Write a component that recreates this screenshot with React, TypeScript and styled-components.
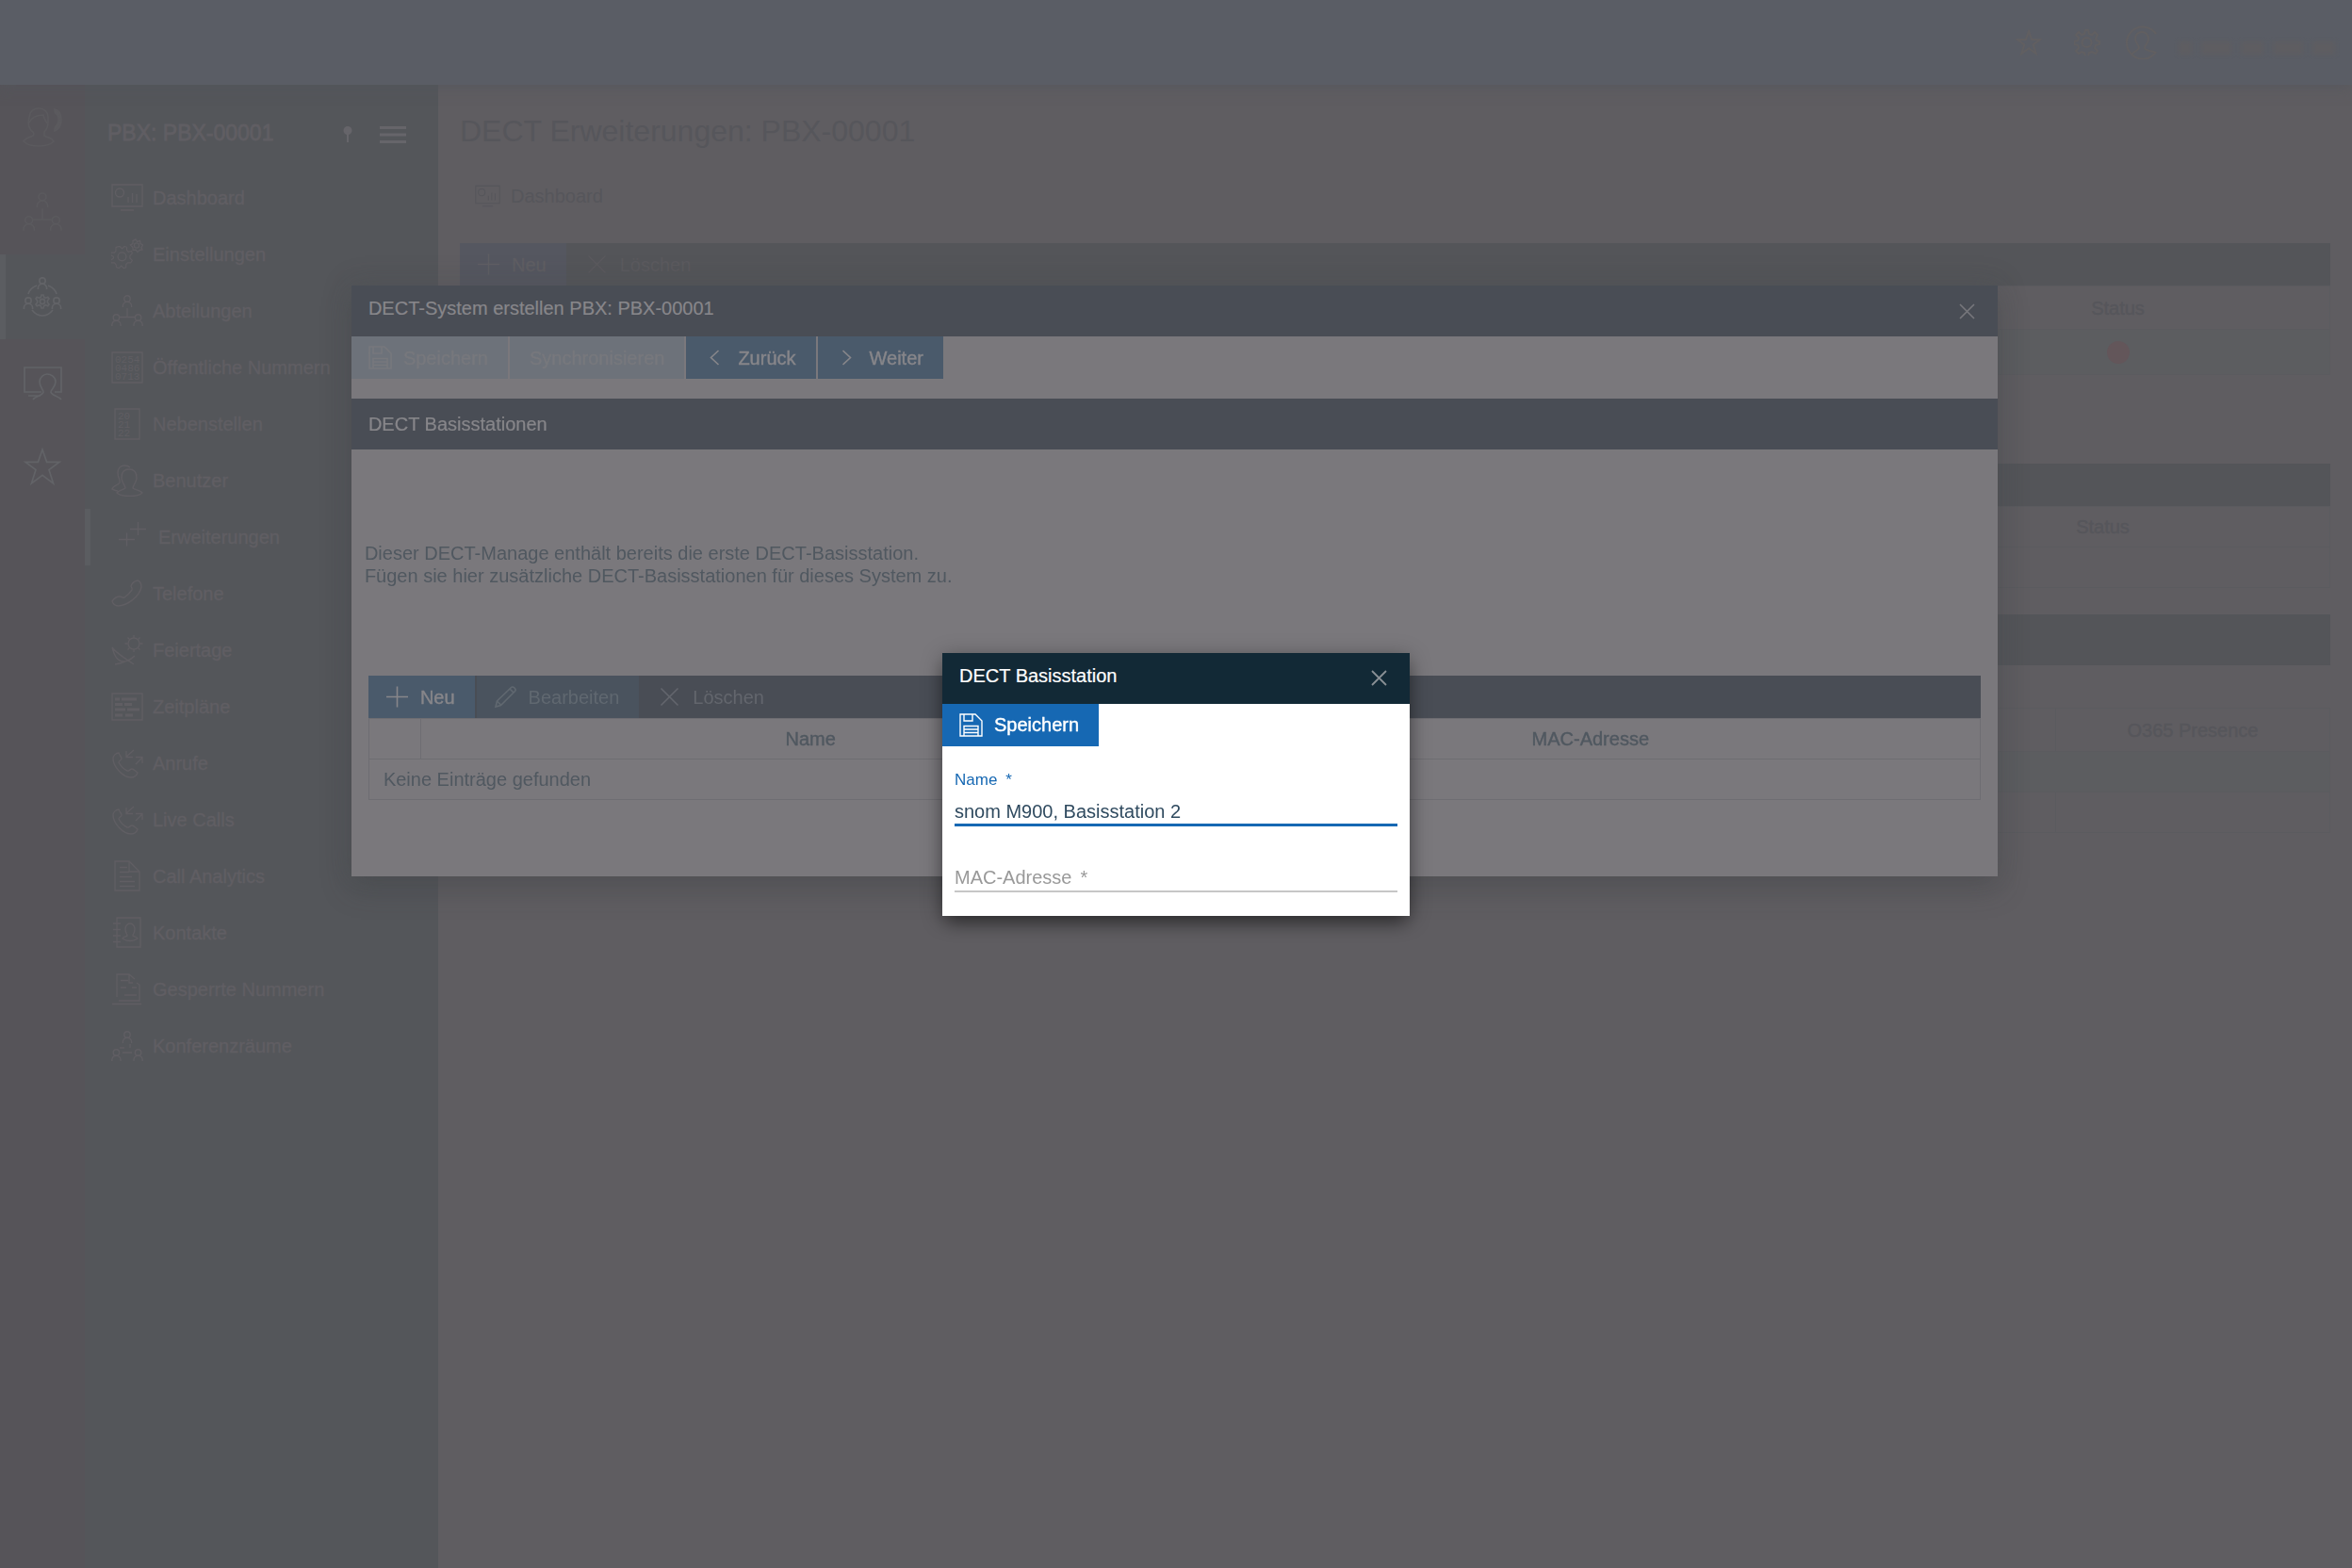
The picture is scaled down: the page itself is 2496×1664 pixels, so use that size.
import React from "react";
import styled, { createGlobalStyle, css } from "styled-components";

const color = {
  topbar: "#5a5d65",
  rail: "#565459",
  side: "#54565a",
  marker: "#5b5d61",
  page: "#5f5d61",
  pageBar: "#545559",
  pageLine: "#5b5b5f",
  pageRow: "#5c5d60",
  pageText: "#56565b",
  sideText: "#605e63",
  dimPaper: "#7a787c",
  dimHeader: "#494d55",
  dimBlue: "#4a5a6b",
  dimOff: "#6d727a",
  dimLine: "#6e6d72",
  dimText: "#505860",
  dimLight: "#87868a",
  paper: "#ffffff",
  header: "#122936",
  blue: "#1668b3",
  ink: "#2f4a5f",
  hint: "#999999",
};

const Global = createGlobalStyle`
  *, *::before, *::after { box-sizing: border-box; }
  html, body { margin: 0; height: 100%; }
  body {
    background: ${color.page};
    font-family: "Liberation Sans", Arial, Helvetica, sans-serif;
    font-size: 20px;
    line-height: 24px;
    overflow: hidden;
  }
  button, input { font: inherit; }
  a { color: inherit; text-decoration: none; }
`;

const medium = css`
  -webkit-text-stroke: 0.4px currentColor;
`;

/* ---------- icons ---------- */

const person = (x: number, y: number) => (
  <>
    <circle cx={x} cy={y} r="3.2" />
    <path d={`M${x - 4.6} ${y + 9}v-1.2a4.6 4.6 0 0 1 9.2 0v1.2`} />
  </>
);

const handset =
  "M2 8c0-3 3-6 6-6 1 3 3 4 3 6 0 2-3 2-3 4 2 4 5 7 9 9 2 1 3-2 5-2 2 0 3 2 6 4-1 3-4 5-7 5C12 28 2 16 2 8z";

const gearPath =
  "M12 1h3l1 4 3 1 3-3 3 3-2 4 1 2 3 1v3l-4 1-1 3 3 3-2 3-4-2-3 1-1 4h-3l-1-4-3-1-3 2-3-3 3-3-1-3-4-1v-3l4-1 1-3-3-3 3-3 3 3 3-1z";

const icons: Record<string, { box: string; body: React.ReactNode }> = {
  agent: {
    box: "0 0 42 42",
    body: (
      <>
        <path d="M11 26C5 22 6 14 7 10 8 4 12 1 17 1c6 0 10 4 10 9v6c0 5-2 8-4 10v4c3 2 8 2 10 6-4 4-10 5-16 5S5 40 1 36c2-4 7-4 10-6 1-1 1-3 0-4z" />
        <path d="M7 16c3-6 9-8 15-8 1 4 3 8 5 9" />
        <path d="M34 2c5 1 7 6 7 11s-2 10-7 12c0-3 0-5 2-6 3-4 3-9 0-12-1 0-2-2-2-5z" fill="currentColor" />
      </>
    ),
  },
  org: {
    box: "0 0 34 34",
    body: (
      <>
        {person(17, 4)}
        {person(5.4, 24)}
        {person(28.6, 24)}
        <path d="M17 14v9M8.5 23.5h17" />
      </>
    ),
  },
  team: {
    box: "0 0 42 42",
    body: (
      <>
        {person(21, 4)}
        {person(6, 25)}
        {person(36, 25)}
        <path d="M15 9C10 11 7 14 6 18M27 9c5 2 8 5 9 9M10 35c6 8 16 8 22 0" />
        <path d="M20 19h2l.8 2.600 1.600.6 2.400-1 1.200 1.800-1.600 2v2l1.600 2-1.200 1.800-2.400-1-1.600.8L22 33h-2l-.8-2.400-1.600-.8-2.400 1-1.200-1.800 1.600-2v-2l-1.600-2 1.200-1.800 2.400 1 1.600-.6z" />
        <circle cx="21" cy="26" r="2.600" />
      </>
    ),
  },
  screenUser: {
    box: "0 0 42 42",
    body: (
      <>
        <path d="M20 32H2V6h39v26h-7" />
        <path d="M11 40c3-4 10-4 11-8 0-3-4-5-4-11 0-4 4-8 8-8s9 3 9 8c0 6-5 8-5 11 1 4 8 4 11 8M6 36h13" />
      </>
    ),
  },
  star: {
    box: "0 0 42 42",
    body: <path d="M21 3l4.600 13.400H39L28 24.600 32.600 39 21 30.400 9.400 39 14 24.600 3 16.400h13.400z" />,
  },
  dashboard: {
    box: "0 0 34 34",
    body: (
      <>
        <path d="M1 3h32v23H1z" />
        <circle cx="9" cy="11.500" r="4.500" />
        <path d="M18 22v-6M22.500 22V12M27 22v-9M10 30h14" />
      </>
    ),
  },
  gears: {
    box: "0 0 34 34",
    body: (
      <>
        <g transform="translate(0 6) scale(.92)">
          <path d="M11 3l3 3 3-3 3 1v4l2 2 4-1 1 3-3 3v3l3 3-2 3h-4l-2 2v4l-3 1-3-3-3 3-3-1-1-4-2-2-4 0-1-3 4-3v-2l-4-2 1-3h4l2-2V4z" transform="scale(.9)" />
          <circle cx="12.500" cy="14.500" r="4.800" />
        </g>
        <path d="M26 1l1.500 2.500 3-1 .5 3 2.500 1.500-1.500 2.500 1 2.500-3 .5-2 2-2-2.500-3 .5V9.500L20.500 7 23 5.500 23 2.500z" />
        <circle cx="27" cy="7.500" r="2.600" />
      </>
    ),
  },
  numbers: {
    box: "0 0 34 34",
    body: (
      <>
        <path d="M1 1h32v32H1z" />
        <g fill="currentColor" stroke="none" fontFamily="Liberation Mono, monospace" fontSize="11">
          <text x="4" y="12">0254</text>
          <text x="4" y="21">0486</text>
          <text x="4" y="30">0713</text>
        </g>
      </>
    ),
  },
  extension: {
    box: "0 0 34 34",
    body: (
      <>
        <path d="M4 1h26v32H4z" />
        <g fill="currentColor" stroke="none" fontFamily="Liberation Mono, monospace" fontSize="11">
          <text x="7" y="12">20</text>
          <text x="7" y="21">21</text>
          <text x="7" y="30">22</text>
        </g>
      </>
    ),
  },
  users: {
    box: "0 0 34 34",
    body: (
      <>
        <path d="M15 25c0-3-4-6-4-11 0-6 3-9 8-9s8 3 8 9c0 5-4 8-4 11 2 2 8 2 10 5-3 3-8 3.500-13 3.500S9 33 6 30c2-3 7-3 9-5z" />
        <path d="M20 3C18 1 16 1 14 1 9 1 7 5 7 9c0 5 3 7 2 10-1 3-7 3-8 7 2 1 4 2 6 2" />
      </>
    ),
  },
  plusPair: { box: "0 0 34 34", body: <path d="M14 8.500h17M22.500 1v14M2 19.500h17M10.500 12.500v14" /> },
  phone: {
    box: "0 0 34 34",
    body: (
      <path d="M28 3c3 1 4 4 4 7-2 10-14 19-24 20-4 0-6-2-7-5 2-3 5-5 8-5 2 0 3 2 5 1 3-2 6-5 8-8 1-2-1-3-1-4 1-3 3-5 7-6z" />
    ),
  },
  holiday: {
    box: "0 0 34 34",
    body: (
      <>
        <circle cx="24" cy="10" r="6" />
        <path d="M24 1v3M24 16v3M14.500 10h3M30.500 10h3M17.500 3.500l2 2M28.500 14.500l2 2M30.500 3.500l-2 2M19.500 14.500l-2 2M1 14c4 6 13 11 23 18M1 14c2 8 6 15 12 15 4 0 8-2 12-6M4 32c7-1 14-3 21-9" />
      </>
    ),
  },
  schedule: {
    box: "0 0 34 34",
    body: (
      <>
        <path d="M1 3h32v28H1z" />
        <path d="M4 9h5M11 9h16M4 14.500h8M14 14.500h8M4 20h11M17 20h13M4 26h8M15 26h8" strokeWidth="3" />
      </>
    ),
  },
  calls: {
    box: "0 0 34 34",
    body: (
      <>
        <path d={handset} transform="translate(0 4)" />
        <path d="M24 3l-8 7M16 4v6.500h7M26 18l7-7M26 10.500h7V17" />
      </>
    ),
  },
  doc: {
    box: "0 0 34 34",
    body: (
      <>
        <path d="M4 1h15l11 11v20H4z" />
        <path d="M19 1v11h11M9 7.500h8M9 12.500h10M9 17.500h13M9 22.500h16M9 27.500h16" />
      </>
    ),
  },
  contacts: {
    box: "0 0 34 34",
    body: (
      <>
        <path d="M6 1h25v31H6z" />
        <path d="M2 7h8M2 13.500h8M2 20h8M2 26.500h8" />
        <path d="M17 20c0-2-2-3-2-7 0-3 2-6 5-6s5 3 5 6c0 4-2 5-2 7 1 1 4 1 5 3-3 2-5 2.500-8 2.500s-5-.5-8-2.500c1-2 4-2 5-3z" />
      </>
    ),
  },
  blocked: {
    box: "0 0 34 34",
    body: (
      <path d="M6 25V1h13l6 5M19 1v9h4M27 10l3 2v17H8M10 7.500h8M10 15h6M22 15h5M14 23h13M1 32.500h31" />
    ),
  },
  rooms: {
    box: "0 0 34 34",
    body: (
      <>
        {person(17, 5)}
        {person(5.4, 24)}
        {person(28.6, 24)}
        <path d="M9 19h5M20 15v4M12 24h10" />
      </>
    ),
  },
  pin: {
    box: "0 0 20 20",
    body: (
      <>
        <circle cx="10" cy="5.500" r="3.500" fill="currentColor" />
        <path d="M10 8v10" />
      </>
    ),
  },
  menu: { box: "0 0 28 28", body: <path d="M0 6.500h28M0 14h28M0 21.500h28" strokeWidth="3" /> },
  save: {
    box: "0 0 25 25",
    body: (
      <>
        <path d="M1 1h16l7 7v16H1z" />
        <path d="M5 1v7h9V1M5 24V13.500h15V24M5 17h15M5 20.500h15" />
      </>
    ),
  },
  plus: { box: "0 0 25 25", body: <path d="M12.500 1.500v22M1 12.500h23" /> },
  pencil: {
    box: "0 0 25 25",
    body: <path d="M2 23l1.500-6L18.500 2.500c2-2 6 2 4 4L7.500 21.500zM17 4l4 4M3.500 17l4 4" />,
  },
  cross: { box: "0 0 25 25", body: <path d="M3.500 3.500l18 18M21.500 3.500l-18 18" /> },
  left: { box: "0 0 25 25", body: <path d="M16.500 5l-8 7.500 8 7.500" /> },
  right: { box: "0 0 25 25", body: <path d="M8.500 5l8 7.500-8 7.500" /> },
  close: { box: "0 0 17 17", body: <path d="M1 1l15 15M16 1L1 16" /> },
  gear: {
    box: "0 0 28 28",
    body: (
      <>
        <path d={gearPath} />
        <circle cx="13.500" cy="14" r="5" />
      </>
    ),
  },
  profile: {
    box: "0 0 36 36",
    body: (
      <>
        <path d="M33 9A17 17 0 1 0 33 28" />
        <path d="M7 31c2-4 7-4 8-7 0-3-4-5-4-10 0-4 3-7 7-7s7 3 7 7c0 5-4 7-4 10 1 3 8 3 12 5" />
      </>
    ),
  },
};

const Svg = styled.svg<{ $size: number }>`
  display: block;
  flex: none;
  width: ${(p) => p.$size}px;
  height: ${(p) => p.$size}px;
  fill: none;
  stroke: currentColor;
`;

function Icon({ name, size, weight = 1.6 }: { name: string; size: number; weight?: number }) {
  return (
    <Svg $size={size} viewBox={icons[name].box} strokeWidth={weight} aria-hidden="true">
      {icons[name].body}
    </Svg>
  );
}

/* ---------- application shell ---------- */

const Shell = styled.div`
  display: flex;
  flex-direction: column;
  min-height: 100vh;
`;

const TopBar = styled.header`
  display: flex;
  align-items: center;
  justify-content: flex-end;
  height: 90px;
  padding-right: 18px;
  background: ${color.topbar};
  box-shadow: 0 2px 14px rgba(82, 86, 92, 0.7);
  z-index: 1;
`;

const TopAction = styled.button<{ $gap: number }>`
  display: flex;
  margin: 0 ${(p) => p.$gap}px 0 0;
  padding: 0;
  border: 0;
  background: none;
  color: #615f61;
`;

const UserName = styled.div`
  display: flex;
  gap: 10px;
  width: 170px;
  padding: 12px 0 0 4px;
`;

const Smudge = styled.span<{ $grow: number }>`
  flex: ${(p) => p.$grow};
  height: 14px;
  background: #5e5d61;
  filter: blur(2px);
`;

const Body = styled.div`
  display: flex;
  flex: 1;
`;

const Rail = styled.nav`
  display: flex;
  flex-direction: column;
  width: 90px;
  background: ${color.rail};
`;

const RailItem = styled.a<{ $active?: boolean; $faint?: boolean }>`
  display: flex;
  align-items: center;
  height: 90px;
  padding-left: ${(p) => (p.$active ? 18 : 24)}px;
  border-left: ${(p) => (p.$active ? `6px solid ${color.marker}` : "0")};
  background: ${(p) => (p.$active ? color.side : "transparent")};
  color: ${(p) => (p.$faint ? "#5b5a5e" : "#626367")};
`;

const Side = styled.nav`
  width: 375px;
  background: ${color.side};
  color: ${color.sideText};
`;

const SideHead = styled.div`
  display: flex;
  align-items: center;
  height: 90px;
  padding: 16px 34px 0 24px;
`;

const SideTitle = styled.h2`
  flex: 1;
  margin: 0;
  padding-bottom: 4px;
  font-size: 23px;
  font-weight: 400;
  -webkit-text-stroke: 0.8px currentColor;
`;

const SideButton = styled.button`
  display: flex;
  margin-left: 24px;
  padding: 0;
  border: 0;
  background: none;
  color: #66656a;
`;

const SideItem = styled.a<{ $active?: boolean }>`
  display: flex;
  align-items: center;
  gap: 10px;
  height: 60px;
  padding-left: 28px;
  border-left: ${(p) => (p.$active ? `6px solid ${color.marker}` : "0")};
  ${medium}
`;

const Main = styled.main`
  flex: 1;
  min-width: 0;
  padding: 29px 23px 0;
  color: ${color.pageText};
`;

const Title = styled.h1`
  margin: 0;
  font-size: 32px;
  line-height: 40px;
  font-weight: 400;
`;

const Crumb = styled.a`
  display: flex;
  align-items: center;
  gap: 11px;
  height: 30px;
  margin: 34px 0 35px 16px;
`;

const Panel = styled.section<{ $gap: number }>`
  margin-bottom: ${(p) => p.$gap}px;
`;

const PageBar = styled.div<{ $tall?: boolean }>`
  display: flex;
  gap: 2px;
  height: ${(p) => (p.$tall ? 54 : 45)}px;
  background: ${color.pageBar};
`;

const PageTable = styled.table<{ $offset?: number }>`
  width: 100%;
  margin-top: ${(p) => p.$offset ?? 0}px;
  border-collapse: collapse;
  table-layout: fixed;
`;

const PageTh = styled.th<{ $tall?: boolean; $width?: number }>`
  width: ${(p) => (p.$width ? `${p.$width}px` : "auto")};
  height: ${(p) => (p.$tall ? 46 : 43)}px;
  padding: 0;
  border: 1px solid ${color.pageLine};
  font-weight: 400;
  ${medium}
`;

const PageTd = styled.td<{ $tall?: boolean; $shade?: boolean }>`
  height: ${(p) => (p.$tall ? 48 : 43)}px;
  padding: 0;
  border: 1px solid ${color.pageLine};
  background: ${(p) => (p.$shade ? color.pageRow : "transparent")};
`;

const Dot = styled.span`
  display: block;
  width: 24px;
  height: 24px;
  margin: 0 auto;
  border-radius: 50%;
  background: #63565a;
`;

/* ---------- buttons and dialogs ---------- */

const tones = {
  primary: { bg: color.blue, fg: "#ffffff" },
  dim: { bg: color.dimBlue, fg: color.dimLight },
  off: { bg: color.dimOff, fg: "#77787d" },
  barOff: { bg: "#4a535e", fg: "#606870" },
  barPlain: { bg: "transparent", fg: "#63666d" },
  page: { bg: "#555760", fg: "#5f5e63" },
  pagePlain: { bg: "transparent", fg: "#5b5a5e" },
};

const ToolButton = styled.button<{ $tone: keyof typeof tones; $textOnly?: boolean; $strong?: boolean }>`
  display: flex;
  align-items: center;
  gap: 12px;
  height: 45px;
  padding: 0 21px 0 ${(p) => (p.$textOnly ? 21 : 18)}px;
  border: 0;
  background: ${(p) => tones[p.$tone].bg};
  color: ${(p) => tones[p.$tone].fg};
  white-space: nowrap;
  ${(p) => p.$strong && medium}
`;

const Backdrop = styled.div<{ $center?: boolean }>`
  position: fixed;
  inset: 0;
  z-index: 2;
  display: flex;
  justify-content: center;
  align-items: ${(p) => (p.$center ? "center" : "flex-start")};
  padding: ${(p) => (p.$center ? "0" : "303px 3px 0 0")};
`;

const SystemDialog = styled.section`
  width: 70vw;
  background: ${color.dimPaper};
  color: ${color.dimText};
  box-shadow: 0 12px 28px rgba(60, 62, 66, 0.35), 0 0 28px rgba(78, 82, 86, 0.3);
`;

const StationDialog = styled.section`
  width: 496px;
  background: ${color.paper};
  box-shadow: 0 10px 18px -4px rgba(0, 0, 0, 0.4), 0 4px 22px rgba(0, 0, 0, 0.3);
`;

const DialogHead = styled.div<{ $dim?: boolean }>`
  display: flex;
  align-items: center;
  justify-content: space-between;
  height: 54px;
  padding: 0 24px 0 18px;
  background: ${(p) => (p.$dim ? color.dimHeader : color.header)};
  color: ${(p) => (p.$dim ? color.dimLight : "#ffffff")};
`;

const DialogTitle = styled.h2`
  margin: 0;
  padding-bottom: 6px;
  font-size: 20px;
  font-weight: 400;
  -webkit-text-stroke: 0.2px currentColor;
`;

const SectionTitle = styled(DialogTitle)`
  padding-bottom: 0;
`;

const CloseButton = styled.button<{ $dim?: boolean }>`
  display: flex;
  padding: 0;
  border: 0;
  background: none;
  color: ${(p) => (p.$dim ? "#77777c" : "#898f94")};
`;

const Toolbar = styled.div<{ $gap?: number }>`
  display: flex;
  gap: 2px;
  margin-bottom: ${(p) => p.$gap ?? 0}px;
`;

const Intro = styled.p`
  margin: 0;
  padding: 98px 14px 94px;
`;

const Stations = styled.div`
  padding: 0 18px 81px;
`;

const StationBar = styled.div`
  display: flex;
  gap: 2px;
  background: ${color.dimHeader};
`;

const StationTable = styled.table`
  width: 100%;
  border-collapse: collapse;
  table-layout: fixed;
`;

const StationTh = styled.th<{ $narrow?: boolean }>`
  width: ${(p) => (p.$narrow ? "55px" : "auto")};
  height: 43px;
  padding: 0;
  border: 1px solid ${color.dimLine};
  border-right-color: ${(p) => (p.$narrow ? color.dimLine : "transparent")};
  font-weight: 400;
  ${medium}
  &:last-child { border-right-color: ${color.dimLine}; }
`;

const StationTd = styled.td`
  height: 43px;
  padding: 0 15px;
  border: 1px solid ${color.dimLine};
`;

const Form = styled.form`
  padding: 26px 13px 25px;
`;

const Field = styled.div`
  display: grid;
`;

const FloatLabel = styled.label`
  margin-bottom: 12px;
  font-size: 17px;
  line-height: 20px;
  color: ${color.blue};
`;

const RestLabel = styled.label`
  grid-area: 1 / 1;
  color: ${color.hint};
  pointer-events: none;
`;

const Required = styled.span`
  margin-left: 9px;
`;

const TextInput = styled.input<{ $focused?: boolean }>`
  width: 100%;
  height: ${(p) => (p.$focused ? 27 : 28)}px;
  padding: 0;
  border: 0;
  border-bottom: ${(p) => (p.$focused ? `3px solid ${color.blue}` : "2px solid #c6c6c6")};
  outline: 0;
  background: transparent;
  color: ${color.ink};
`;

const RestField = styled(Field)`
  margin-top: 42px;
  ${TextInput} { grid-area: 1 / 1; }
`;

const railItems = [
  { icon: "agent", label: "Agenten", faint: true },
  { icon: "org", label: "Struktur", faint: true },
  { icon: "team", label: "PBX", active: true },
  { icon: "screenUser", label: "Arbeitsplatz" },
  { icon: "star", label: "Favoriten" },
];

const sideItems = [
  ["dashboard", "Dashboard"],
  ["gears", "Einstellungen"],
  ["org", "Abteilungen"],
  ["numbers", "Öffentliche Nummern"],
  ["extension", "Nebenstellen"],
  ["users", "Benutzer"],
  ["plusPair", "Erweiterungen"],
  ["phone", "Telefone"],
  ["holiday", "Feiertage"],
  ["schedule", "Zeitpläne"],
  ["calls", "Anrufe"],
  ["calls", "Live Calls"],
  ["doc", "Call Analytics"],
  ["contacts", "Kontakte"],
  ["blocked", "Gesperrte Nummern"],
  ["rooms", "Konferenzräume"],
];

function Navigation() {
  return (
    <>
      <Rail>
        {railItems.map((item) => (
          <RailItem key={item.icon} href="#" aria-label={item.label} $active={item.active} $faint={item.faint}>
            <Icon name={item.icon} size={42} weight={item.icon === "org" ? 1.3 : 1.7} />
          </RailItem>
        ))}
      </Rail>
      <Side>
        <SideHead>
          <SideTitle>PBX: PBX-00001</SideTitle>
          <SideButton aria-label="Anheften">
            <Icon name="pin" size={20} weight={2} />
          </SideButton>
          <SideButton aria-label="Menü">
            <Icon name="menu" size={28} />
          </SideButton>
        </SideHead>
        {sideItems.map(([icon, label]) => (
          <SideItem key={label} href="#" $active={label === "Erweiterungen"}>
            <Icon name={icon} size={34} weight={1.4} />
            {label}
          </SideItem>
        ))}
      </Side>
    </>
  );
}

function Page() {
  return (
    <Main>
      <Title>DECT Erweiterungen: PBX-00001</Title>
      <Crumb href="#">
        <Icon name="dashboard" size={27} weight={1.3} />
        Dashboard
      </Crumb>
      <Panel $gap={94}>
        <PageBar>
          <ToolButton $tone="page" $strong>
            <Icon name="plus" size={25} />
            Neu
          </ToolButton>
          <ToolButton $tone="pagePlain">
            <Icon name="cross" size={25} weight={1.3} />
            Löschen
          </ToolButton>
        </PageBar>
        <PageTable>
          <thead>
            <tr>
              <PageTh $tall />
              <PageTh $tall $width={450}>Status</PageTh>
            </tr>
          </thead>
          <tbody>
            <tr>
              <PageTd $tall $shade />
              <PageTd $tall $shade>
                <Dot />
              </PageTd>
            </tr>
          </tbody>
        </PageTable>
      </Panel>
      <Panel $gap={28}>
        <PageBar />
        <PageTable>
          <thead>
            <tr>
              <PageTh />
              <PageTh $width={482}>Status</PageTh>
            </tr>
          </thead>
          <tbody>
            <tr>
              <PageTd colSpan={2} />
            </tr>
          </tbody>
        </PageTable>
      </Panel>
      <Panel $gap={0}>
        <PageBar $tall />
        <PageTable $offset={45}>
          <thead>
            <tr>
              <PageTh $tall />
              <PageTh $tall $width={291}>O365 Presence</PageTh>
            </tr>
          </thead>
          <tbody>
            <tr>
              <PageTd colSpan={2} $shade />
            </tr>
            <tr>
              <PageTd />
              <PageTd />
            </tr>
          </tbody>
        </PageTable>
      </Panel>
    </Main>
  );
}

export default function App() {
  return (
    <>
      <Global />
      <Shell>
        <TopBar>
          <TopAction aria-label="Favoriten" $gap={34}>
            <Icon name="star" size={28} weight={3} />
          </TopAction>
          <TopAction aria-label="Einstellungen" $gap={26}>
            <Icon name="gear" size={28} weight={2} />
          </TopAction>
          <TopAction aria-label="Profil" $gap={17}>
            <Icon name="profile" size={36} weight={2} />
          </TopAction>
          <UserName>
            {[4, 9, 7, 9, 7].map((grow, i) => (
              <Smudge key={i} $grow={grow} />
            ))}
          </UserName>
        </TopBar>
        <Body>
          <Navigation />
          <Page />
        </Body>
      </Shell>

      <Backdrop>
        <SystemDialog role="dialog" aria-label="DECT-System erstellen">
          <DialogHead $dim>
            <DialogTitle>DECT-System erstellen PBX: PBX-00001</DialogTitle>
            <CloseButton $dim aria-label="Schließen">
              <Icon name="close" size={17} />
            </CloseButton>
          </DialogHead>
          <Toolbar $gap={21}>
            <ToolButton $tone="off" $strong disabled>
              <Icon name="save" size={25} />
              Speichern
            </ToolButton>
            <ToolButton $tone="off" $strong $textOnly disabled>
              Synchronisieren
            </ToolButton>
            <ToolButton $tone="dim" $strong>
              <Icon name="left" size={25} />
              Zurück
            </ToolButton>
            <ToolButton $tone="dim" $strong>
              <Icon name="right" size={25} />
              Weiter
            </ToolButton>
          </Toolbar>
          <DialogHead $dim>
            <SectionTitle as="h3">DECT Basisstationen</SectionTitle>
          </DialogHead>
          <Intro>
            Dieser DECT-Manage enthält bereits die erste DECT-Basisstation.
            <br />
            Fügen sie hier zusätzliche DECT-Basisstationen für dieses System zu.
          </Intro>
          <Stations>
            <StationBar>
              <ToolButton $tone="dim" $strong>
                <Icon name="plus" size={25} />
                Neu
              </ToolButton>
              <ToolButton $tone="barOff" disabled>
                <Icon name="pencil" size={25} />
                Bearbeiten
              </ToolButton>
              <ToolButton $tone="barPlain" disabled>
                <Icon name="cross" size={25} />
                Löschen
              </ToolButton>
            </StationBar>
            <StationTable>
              <thead>
                <tr>
                  <StationTh $narrow />
                  <StationTh>Name</StationTh>
                  <StationTh>MAC-Adresse</StationTh>
                </tr>
              </thead>
              <tbody>
                <tr>
                  <StationTd colSpan={3}>Keine Einträge gefunden</StationTd>
                </tr>
              </tbody>
            </StationTable>
          </Stations>
        </SystemDialog>
      </Backdrop>

      <Backdrop $center>
        <StationDialog role="dialog" aria-label="DECT Basisstation">
          <DialogHead>
            <DialogTitle>DECT Basisstation</DialogTitle>
            <CloseButton aria-label="Schließen">
              <Icon name="close" size={17} weight={1.8} />
            </CloseButton>
          </DialogHead>
          <Toolbar>
            <ToolButton $tone="primary" $strong>
              <Icon name="save" size={25} weight={1.4} />
              Speichern
            </ToolButton>
          </Toolbar>
          <Form>
            <Field>
              <FloatLabel htmlFor="station-name">
                Name<Required>*</Required>
              </FloatLabel>
              <TextInput id="station-name" $focused defaultValue="snom M900, Basisstation 2" />
            </Field>
            <RestField>
              <RestLabel htmlFor="station-mac">
                MAC-Adresse<Required>*</Required>
              </RestLabel>
              <TextInput id="station-mac" />
            </RestField>
          </Form>
        </StationDialog>
      </Backdrop>
    </>
  );
}
